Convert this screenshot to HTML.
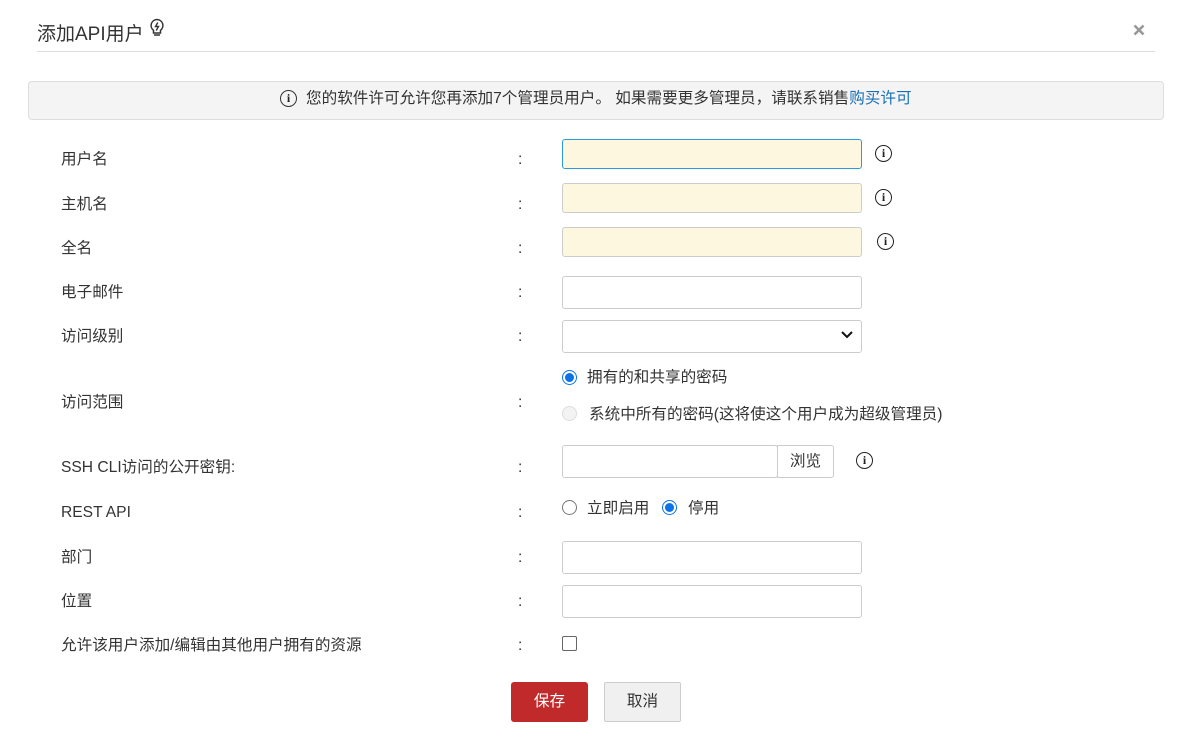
<!DOCTYPE html>
<html><head><meta charset="utf-8"><style>
body{margin:0;width:1187px;height:739px;background:#fff;font-family:"Liberation Sans","Noto Sans CJK SC",sans-serif;font-size:15.6px;color:#333;position:relative;overflow:hidden}
.a{position:absolute}
.lab{position:absolute;left:61px;line-height:24px}
.col{position:absolute;left:518px;line-height:24px}
.inp{position:absolute;left:562px;width:298px;border:1px solid #ccc;border-radius:3px;background:#fff}
.y{background:#fdf7e0}
.info{position:absolute;width:15px;height:15px;border:1.5px solid #222;border-radius:50%;font:bold 12px "Liberation Serif",serif;text-align:center;line-height:15px;color:#222}
.rad{position:absolute;width:13px;height:13px;border-radius:50%;border:1px solid #777;background:#fff}
.rad.on{border:1px solid #0b72e7;}
.rad.on:after{content:"";position:absolute;left:2px;top:2px;width:9px;height:9px;border-radius:50%;background:#0b72e7}
</style></head><body>
<div class="a" style="left:37px;top:19px;font-size:19px;color:#333">添加API用户</div>
<svg class="a" style="left:149px;top:18px" width="16" height="20" viewBox="0 0 16 20"><path d="M8 1.5a6 6 0 0 0-3.5 10.8V15h7v-2.7A6 6 0 0 0 8 1.5z" fill="none" stroke="#333" stroke-width="1.5"/><path d="M5 17h6M8.8 4.5 6.5 8.5h3l-2.3 4" fill="none" stroke="#333" stroke-width="1.4"/></svg>
<svg class="a" style="left:1133px;top:24px" width="12" height="12"><path d="M1.5 1.5l9 9M10.5 1.5l-9 9" stroke="#999" stroke-width="2.6"/></svg>
<div class="a" style="left:37px;top:51px;width:1118px;height:1px;background:#ddd"></div>
<div class="a" style="left:28px;top:81px;width:1134px;height:37px;background:#f4f4f4;border:1px solid #ddd;border-radius:4px"></div>
<div class="info" style="left:280px;top:90px;border-color:#333">i</div>
<div class="a" style="left:306px;top:87px;line-height:24px;color:#333">您的软件许可允许您再添加7个管理员用户。 如果需要更多管理员，请联系销售<span style="color:#1a6fb5">购买许可</span></div>

<div class="lab" style="top:148px">用户名</div><div class="col" style="top:148px">:</div>
<div class="inp y" style="top:139px;height:28px;border-color:#2b9be0"></div><div class="info" style="left:875px;top:145px">i</div>
<div class="lab" style="top:193px">主机名</div><div class="col" style="top:193px">:</div>
<div class="inp y" style="top:183px;height:28px"></div><div class="info" style="left:875px;top:189px">i</div>
<div class="lab" style="top:237px">全名</div><div class="col" style="top:237px">:</div>
<div class="inp y" style="top:227px;height:28px"></div><div class="info" style="left:877px;top:233px">i</div>
<div class="lab" style="top:281px">电子邮件</div><div class="col" style="top:281px">:</div>
<div class="inp" style="top:276px;height:31px"></div>
<div class="lab" style="top:325px">访问级别</div><div class="col" style="top:325px">:</div>
<div class="inp" style="top:320px;height:31px"></div>
<svg class="a" style="left:840px;top:330px" width="14" height="10"><path d="M2 2l5 5 5-5" fill="none" stroke="#111" stroke-width="2"/></svg>
<div class="lab" style="top:391px">访问范围</div><div class="col" style="top:391px">:</div>
<div class="rad on" style="left:562px;top:370px"></div><div class="a" style="left:587px;top:366px;line-height:24px">拥有的和共享的密码</div>
<div class="rad" style="left:562px;top:406px;border-color:#ddd;background:#f3f3f3"></div><div class="a" style="left:589px;top:403px;line-height:24px">系统中所有的密码(这将使这个用户成为超级管理员)</div>
<div class="lab" style="top:456px">SSH CLI访问的公开密钥:</div><div class="col" style="top:456px">:</div>
<div class="inp" style="top:445px;height:31px;width:214px"></div>
<div class="a" style="left:777px;top:445px;width:55px;height:31px;border:1px solid #ccc;border-radius:0 3px 3px 0;background:#fff;text-align:center;line-height:31px">浏览</div>
<div class="info" style="left:856px;top:452px">i</div>
<div class="lab" style="top:501px">REST API</div><div class="col" style="top:501px">:</div>
<div class="rad" style="left:562px;top:500px"></div><div class="a" style="left:587px;top:497px;line-height:24px">立即启用</div>
<div class="rad on" style="left:662px;top:500px"></div><div class="a" style="left:688px;top:497px;line-height:24px">停用</div>
<div class="lab" style="top:546px">部门</div><div class="col" style="top:546px">:</div>
<div class="inp" style="top:541px;height:31px"></div>
<div class="lab" style="top:590px">位置</div><div class="col" style="top:590px">:</div>
<div class="inp" style="top:585px;height:31px"></div>
<div class="lab" style="top:634px">允许该用户添加/编辑由其他用户拥有的资源</div><div class="col" style="top:634px">:</div>
<div class="a" style="left:562px;top:636px;width:13px;height:13px;border:1px solid #666;border-radius:2px"></div>
<div class="a" style="left:511px;top:682px;width:77px;height:40px;background:#c12a2a;border-radius:3px;color:#fff;text-align:center;line-height:40px">保存</div>
<div class="a" style="left:604px;top:682px;width:75px;height:38px;background:#f0f0f0;border:1px solid #ccc;border-radius:2px;color:#333;text-align:center;line-height:38px">取消</div>
</body></html>
